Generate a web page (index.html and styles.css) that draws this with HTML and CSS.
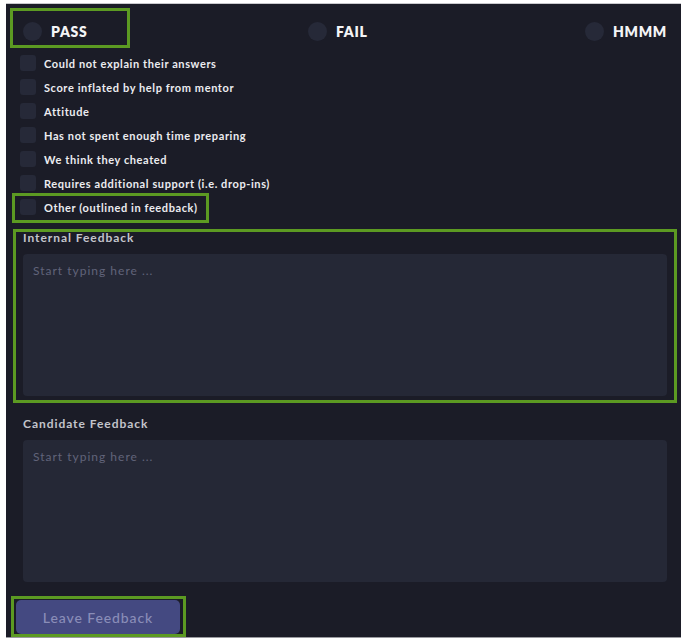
FILE: index.html
```html
<!DOCTYPE html>
<html>
<head>
<meta charset="utf-8">
<link rel="stylesheet" href="styles.css">
</head>
<body>
<div class="panel">
  <div class="radios">
    <div class="radio pass hl"><span class="dot"></span><span class="rlabel">PASS</span></div>
    <div class="radio fail"><span class="dot"></span><span class="rlabel">FAIL</span></div>
    <div class="radio hmmm"><span class="dot"></span><span class="rlabel">HMMM</span></div>
  </div>
  <div class="checks">
    <div class="check"><span class="box"></span><span>Could not explain their answers</span></div>
    <div class="check"><span class="box"></span><span>Score inflated by help from mentor</span></div>
    <div class="check"><span class="box"></span><span>Attitude</span></div>
    <div class="check"><span class="box"></span><span>Has not spent enough time preparing</span></div>
    <div class="check"><span class="box"></span><span>We think they cheated</span></div>
    <div class="check"><span class="box"></span><span>Requires additional support (i.e. drop-ins)</span></div>
    <div class="check other hl"><span class="box"></span><span>Other (outlined in feedback)</span></div>
  </div>
  <div class="fields">
    <div class="field internal hl">
      <label class="flabel">Internal Feedback</label>
      <textarea class="ta" placeholder="Start typing here ..."></textarea>
    </div>
    <div class="field candidate">
      <label class="flabel">Candidate Feedback</label>
      <textarea class="ta" placeholder="Start typing here ..."></textarea>
    </div>
  </div>
  <div class="actions">
    <button class="btn hl">Leave Feedback</button>
  </div>
</div>
</body>
</html>
```

FILE: styles.css
```css
html, body {
  margin: 0;
  padding: 0;
  background: #ffffff;
}
body {
  font-family: "Lato", "Noto Sans", sans-serif;
}
.panel {
  margin: 3px 0 0 6px;
  width: 675px;
  height: 633px;
  background: #1b1c27;
  border-top: 1px solid #c9c9cd;
  border-bottom: 1px solid #9a9aa0;
  box-sizing: content-box;
}
.hl {
  position: relative;
}
.hl::after {
  content: "";
  position: absolute;
  border: 3px solid #5c9a22;
  pointer-events: none;
}
.radios {
  display: flex;
  padding: 4px 1px 0 4px;
}
.radio {
  display: flex;
  align-items: center;
  gap: 9px;
  height: 40px;
  box-sizing: border-box;
  padding: 13px 13px 7px 13px;
}
.radio.pass { width: 120px; }
.radio.pass::after { inset: 0; }
.radio.fail { margin-left: 165px; }
.radio.hmmm { margin-left: auto; }
.dot {
  width: 19px;
  height: 19px;
  border-radius: 50%;
  background: #262938;
  flex: none;
}
.rlabel {
  color: #f4f4f6;
  font-weight: 800;
  font-size: 14px;
  letter-spacing: 0.7px;
}
.checks {
  display: flex;
  flex-direction: column;
  align-items: flex-start;
  padding-left: 14px;
  margin-top: 3px;
}
.check {
  display: flex;
  align-items: center;
  gap: 8px;
  height: 24px;
  color: #ececf0;
  font-size: 11px;
  font-weight: 700;
  letter-spacing: 0.6px;
}
.box {
  width: 16px;
  height: 16px;
  border-radius: 3px;
  background: #262938;
  flex: none;
}
.check.other::after {
  top: -2px;
  bottom: -4px;
  left: -8px;
  right: -11px;
}
.fields {
  padding: 0 14px 0 17px;
  margin-top: 11px;
}
.field {
  display: flex;
  flex-direction: column;
}
.field + .field {
  margin-top: 20px;
}
.field.internal::after {
  top: -1px;
  bottom: -7px;
  left: -10px;
  right: -10px;
}
.flabel {
  font-size: 12px;
  line-height: 16px;
  font-weight: 700;
  color: #c3c4cb;
  letter-spacing: 0.95px;
}
.ta {
  margin-top: 8px;
  height: 142px;
  box-sizing: border-box;
  background: #252836;
  border: none;
  border-radius: 4px;
  padding: 9px 10px;
  resize: none;
  font-family: "Lato", "Noto Sans", sans-serif;
  font-size: 12px;
  line-height: 16px;
  color: #d0d0d8;
  outline: none;
}
.ta::placeholder {
  color: #61647a;
  letter-spacing: 1px;
}
.actions {
  padding-left: 10px;
  margin-top: 18px;
}
.btn {
  width: 164px;
  height: 34px;
  border: none;
  border-radius: 5px;
  background: #444981;
  color: #8a8db8;
  font-family: "Lato", "Noto Sans", sans-serif;
  font-size: 14px;
  font-weight: 500;
  letter-spacing: 0.9px;
  padding: 0;
}
.btn.hl::after {
  top: -4px;
  bottom: -3px;
  left: -5px;
  right: -6px;
}
```
